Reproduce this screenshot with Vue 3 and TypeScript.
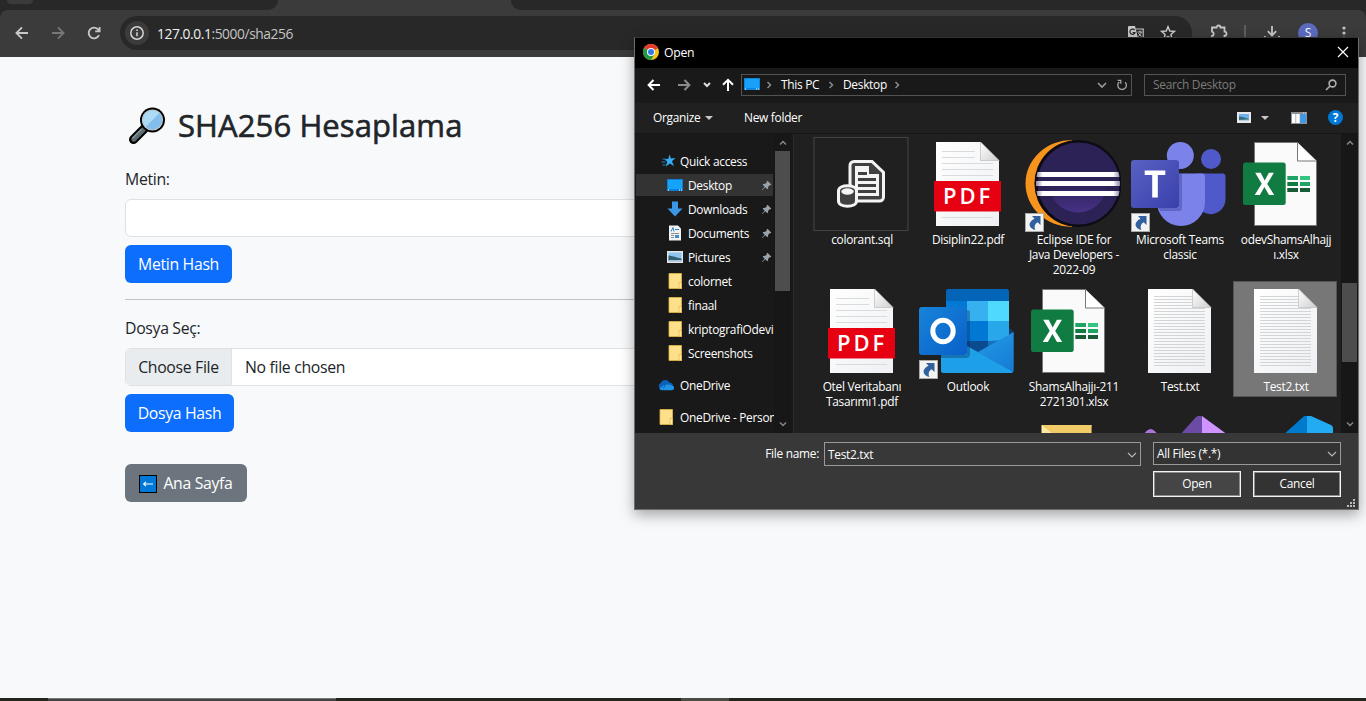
<script setup lang="ts">
interface SideItem {
  label: string
  icon: string
  sub?: boolean
  pinned?: boolean
  active?: boolean
  gap?: boolean
}
interface FileItem {
  kind: string
  lines: string[]
  link?: boolean
  selected?: boolean
}

const places: SideItem[] = [
  { label: 'Quick access', icon: 'star' },
  { label: 'Desktop', icon: 'desktop', sub: true, pinned: true, active: true },
  { label: 'Downloads', icon: 'down', sub: true, pinned: true },
  { label: 'Documents', icon: 'doc', sub: true, pinned: true },
  { label: 'Pictures', icon: 'pic', sub: true, pinned: true },
  { label: 'colornet', icon: 'folder', sub: true },
  { label: 'finaal', icon: 'folder', sub: true },
  { label: 'kriptografiOdevi', icon: 'folder', sub: true },
  { label: 'Screenshots', icon: 'folder', sub: true },
  { label: 'OneDrive', icon: 'cloud', gap: true },
  { label: 'OneDrive - Person', icon: 'folder', gap: true },
]

const files: FileItem[] = [
  { kind: 'sql', lines: ['colorant.sql'] },
  { kind: 'pdf', lines: ['Disiplin22.pdf'] },
  { kind: 'eclipse', lines: ['Eclipse IDE for', 'Java Developers -', '2022-09'], link: true },
  { kind: 'teams', lines: ['Microsoft Teams', 'classic'], link: true },
  { kind: 'xlsx', lines: ['odevShamsAlhajj', 'ı.xlsx'] },
  { kind: 'pdf', lines: ['Otel Veritabanı', 'Tasarımı1.pdf'] },
  { kind: 'outlook', lines: ['Outlook'], link: true },
  { kind: 'xlsx', lines: ['ShamsAlhajjı-211', '2721301.xlsx'] },
  { kind: 'txt', lines: ['Test.txt'] },
  { kind: 'txt', lines: ['Test2.txt'], selected: true },
  { kind: 'none', lines: [] },
  { kind: 'none', lines: [] },
  { kind: 'bigfolder', lines: [] },
  { kind: 'vs', lines: [] },
  { kind: 'vscode', lines: [] },
]

const textRules = Array.from({ length: 24 }, (_, i) => 12.5 + i * 3)
</script>

<template>
  <div class="screen">
    <div class="tabstrip">
      <div class="tabs-left"><i class="tab-btn"></i></div>
      <div></div>
      <div class="tabs-right"></div>
    </div>
    <header class="toolbar-wrap">
      <div class="toolbar">
        <svg class="nav" viewBox="0 0 16 16"><path d="M14 8H2.6M8 2.4 2.4 8 8 13.6" /></svg>
        <svg class="nav dim" viewBox="0 0 16 16"><path d="M2 8h11.4M8 2.4 13.6 8 8 13.6" /></svg>
        <svg class="nav" viewBox="0 0 16 16"><path d="M13 10.2A5.4 5.4 0 1 1 12.3 4.6L13.5 6M13.6 2v4.4H9.2" /></svg>
        <div class="omnibox">
          <span class="info"><svg viewBox="0 0 16 16"><circle cx="8" cy="8" r="6.2" /><path d="M8 7.2v4M8 4.6v1.4" /></svg></span>
          <span class="url"><b>127.0.0.1</b>:5000/sha256</span>
          <svg class="translate" viewBox="0 0 18 16">
            <path d="M2 1h6l3 12H2a1 1 0 0 1-1-1V2a1 1 0 0 1 1-1z" fill="#c7c7c7" />
            <path d="M8.8 4h7.4v10.5H11" fill="none" stroke="#c7c7c7" stroke-width="1.2" />
            <path d="M7.6 5.2A2.6 2.6 0 1 0 8 7.5H5.6" fill="none" stroke="#282828" stroke-width="1.2" />
            <path d="M10.5 7H15M13 5.6V7M14.3 7c-.4 2-1.6 3.5-3 4.5M11.5 8.2c.8 1.4 2 2.6 3.2 3.3" fill="none" stroke="#c7c7c7" />
          </svg>
          <svg class="fav" viewBox="0 0 16 16"><path d="M8 1.8 9.8 6l4.6.4-3.5 3 1.1 4.5L8 11.5l-4 2.4 1.1-4.5-3.5-3L6.2 6z" /></svg>
        </div>
        <svg class="ext" viewBox="0 0 18 18"><path d="M2 3.5h4.5a2 2 0 0 1 4 0h4v4.2a2 2 0 0 1 0 4V16H2v-4a2.2 2.2 0 0 0 0-4.3z" /></svg>
        <i class="sep"></i>
        <svg class="dl" viewBox="0 0 18 18"><path d="M9 2v9M4.8 7.2 9 11.4l4.2-4.2M1.8 12v3.500h14.400V12" /></svg>
        <span class="avatar">S</span>
        <svg class="more" viewBox="0 0 4 16"><circle cx="2" cy="3" r="1.6" /><circle cx="2" cy="8" r="1.6" /><circle cx="2" cy="13" r="1.6" /></svg>
      </div>
    </header>

    <main class="page">
      <h1>
        <svg class="lens" viewBox="0 0 38 38">
          <path d="M5.5 32.5 16.5 21.5" stroke="#000" stroke-width="9" stroke-linecap="round" />
          <path d="M5.8 32.2 15.5 22.5" stroke="#5c6b70" stroke-width="5" stroke-linecap="round" />
          <path d="M4.8 31 13 22.8" stroke="#8b989b" stroke-width="1.4" stroke-linecap="round" />
          <circle cx="24.5" cy="13" r="12.5" fill="#000" />
          <circle cx="24.5" cy="13" r="10.6" fill="#c4c9cc" />
          <circle cx="24.5" cy="13" r="9.6" fill="#83bdec" />
          <path d="M17.7 19.8A9.6 9.6 0 0 1 31.3 6.2z" fill="#addaf5" />
        </svg>
        <span>SHA256 Hesaplama</span>
      </h1>
      <label>Metin:</label>
      <div class="field"></div>
      <button class="btn b1">Metin Hash</button>
      <hr />
      <label class="l2">Dosya Seç:</label>
      <div class="field file"><span class="choose">Choose File</span><span class="nofile">No file chosen</span></div>
      <button class="btn b2">Dosya Hash</button>
      <button class="btn home">
        <svg viewBox="0 0 18 18"><rect x=".5" y=".5" width="17" height="17" fill="#0078d7" stroke="#000" /><path d="M14 9H4.5M7 6.8 4.6 9 7 11.2" fill="none" stroke="#fff" stroke-width="1.1" /></svg>
        <span>Ana Sayfa</span>
      </button>
    </main>
    <footer class="taskbar"><i></i><i class="task"></i><i></i><i class="task2"></i></footer>

    <section class="dialog">
      <div class="titlebar">
        <svg class="chrome" viewBox="0 0 16 16">
          <circle cx="8" cy="8" r="8" fill="#fbc116" />
          <path d="M8 8 1.07 4A8 8 0 0 1 14.93 4z" fill="#e33b2e" />
          <path d="M8 8 1.07 4A8 8 0 0 0 8 16l3.5-6z" fill="#229a48" />
          <path d="M8 4h6.93L8 8z" fill="#e33b2e" />
          <circle cx="8" cy="8" r="4" fill="#fff" /><circle cx="8" cy="8" r="3" fill="#3478e8" />
        </svg>
        <span>Open</span>
        <svg class="close" viewBox="0 0 12 12"><path d="m1 1 10 10M11 1 1 11" /></svg>
      </div>
      <div class="navrow">
        <svg class="arr" viewBox="0 0 14 14"><path d="M13 7H2M6.5 2 1.6 7l4.9 5" /></svg>
        <svg class="arr a2" viewBox="0 0 14 14"><path d="M1 7h11M7.5 2l4.900 5-4.900 5" /></svg>
        <svg class="chev a3" viewBox="0 0 8 6"><path d="m1 1 3 3 3-3" /></svg>
        <svg class="arr a4" viewBox="0 0 14 14"><path d="M7 13V2M2 6.8 7 1.8l5 5" /></svg>
        <div class="address">
          <svg class="desk" viewBox="0 0 16 12"><rect width="16" height="12" fill="#0d86dd" /><rect x="1" y="1" width="14" height="9" fill="#18a0fb" /><path d="M1 11h1M12 11h1M14 11h1" stroke="#fff" /></svg>
          <svg class="sepc" viewBox="0 0 6 8"><path d="m1.5 1 3 3-3 3" /></svg>
          <span class="c1">This PC</span>
          <svg class="sepc" viewBox="0 0 6 8"><path d="m1.5 1 3 3-3 3" /></svg>
          <span class="c2">Desktop</span>
          <svg class="sepc" viewBox="0 0 6 8"><path d="m1.5 1 3 3-3 3" /></svg>
          <svg class="drop" viewBox="0 0 10 8"><path d="m1 2 4 4 4-4" /></svg>
          <svg class="reload" viewBox="0 0 12 12"><path d="M9.2 3.2A4.3 4.3 0 1 1 3.2 3M1.6 1.4h3.2v3.4" /></svg>
        </div>
        <div class="search"><span>Search Desktop</span><svg viewBox="0 0 12 12"><circle cx="7.5" cy="4.5" r="3.4" /><path d="M5 7 1 11" /></svg></div>
      </div>
      <div class="cmdrow">
        <span class="org">Organize</span><i class="tri"></i><span class="newf">New folder</span>
        <svg class="view" viewBox="0 0 14 11"><rect width="14" height="11" fill="#e8e8e8" /><rect x="2" y="2" width="10" height="7" fill="#6fb0ee" /><path d="M2 4.5 6 5l6 2v2H2z" fill="#33707d" /><path d="M2 8 12 7.500V9H2z" fill="#b7cfe4" /></svg>
        <i class="tri t2"></i>
        <svg class="pane" viewBox="0 0 16 12"><rect width="16" height="12" fill="#8b9299" /><path d="M1 2h3.5v9H1zM5.2 2h3.5v9H5.2z" fill="#fff" /><path d="M9.4 2H15v9H9.4z" fill="#3c9be8" /><path d="M12 1h1M14 1h1" stroke="#ddd" /></svg>
        <span class="help">?</span>
      </div>
      <div class="body">
        <nav class="side">
          <div v-for="p in places" :key="p.label" class="place" :class="{ sub: p.sub, active: p.active, gap: p.gap }">
            <svg class="pi" viewBox="0 0 16 16">
              <g v-if="p.icon === 'star'"><path d="m8.5 1.500 1.400 4 4.600-.5-3.500 3.200 2 5-4-2.700-4.300 3 1.600-4.700-2.800-2.600 3.900-.4z" fill="#35aef5" /><path d="M1.500 6h3M.5 9h4M1.500 12h3" stroke="#2183c4" /></g>
              <g v-else-if="p.icon === 'desktop'"><rect y="2" width="16" height="12" fill="#0b7fd6" /><rect x="1" y="3" width="14" height="9" fill="#18a3fb" /><path d="M1 13h1M12 13h1M14 13h1" stroke="#fff" /></g>
              <path v-else-if="p.icon === 'down'" d="M5 .5h6v7h4.5L8 15.5.5 7.5H5z" fill="#3b97e6" />
              <g v-else-if="p.icon === 'doc'"><path d="M2 .5h9l3 3v12H2z" fill="#f2f2f2" /><path d="M4 6.500 6 2.500l1 4M8 4.500h4" stroke="#2d82c8" /><path d="M4 8.500h8M4 10.500h3M4 12.500h3" stroke="#8a8f94" /><path d="M8 10h4v3H8z" fill="#3b8fd0" /></g>
              <g v-else-if="p.icon === 'pic'"><rect y="2" width="16" height="12" fill="#e6e6e6" /><rect x="1.5" y="3.5" width="13" height="9" fill="#8cc4f2" /><path d="M1.5 6.500c4 0 8 2.500 13 3v2h-13z" fill="#2f5f70" /><path d="M1.500 11h13v1.500h-13z" fill="#a9c3d8" /></g>
              <g v-else-if="p.icon === 'folder'"><path d="M2 .5h12.500v15H2z" fill="#ffe08a" stroke="#e2b84a" stroke-width=".8" /><path d="M12 9.500h2.500v6H12z" fill="#ffe9a8" stroke="#e2b84a" stroke-width=".8" /></g>
              <g v-else><path d="M3.500 12.500A3.500 3.500 0 0 1 2.600 6 5 5 0 0 1 11.500 5.500 4 4 0 0 1 15 9l-3 3z" fill="#0a63b8" /><path d="m5 12.800 3-5.300 4 .2 2.500 1a2.300 2.300 0 0 1-.8 4.500H4.500a4 4 0 0 1-3.200-1.500l5-4z" fill="#1f93e4" /></g>
            </svg>
            <span>{{ p.label }}</span>
            <svg v-if="p.pinned" class="pin" viewBox="0 0 12 12"><path d="m7 .8 4.2 4.2-.9.8-.8-.2L7.800 7.300l-.1 2.100-.9.800L4.600 8 1.200 11.300.8 10.900 4 7.400 1.800 5.200l.8-.9 2.200-.1 1.600-1.700-.2-.9z" /></svg>
          </div>
        </nav>
        <div class="sbar sbar-l"><svg viewBox="0 0 8 6"><path d="m1 4.500 3-3 3 3" /></svg><i></i><svg viewBox="0 0 8 6"><path d="m1 1.500 3 3 3-3" /></svg></div>
        <div class="split"></div>
        <div class="grid">
          <div v-for="(f, n) in files" :key="n" class="cell" :class="{ sel: f.selected }">
            <svg class="fi" viewBox="0 0 96 96">
              <defs>
                <linearGradient id="paper" x2="1" y2="1"><stop stop-color="#fff" /><stop offset="1" stop-color="#eef0f3" /></linearGradient>
                <linearGradient id="fold" x2="1" y2="1"><stop stop-color="#fff" /><stop offset="1" stop-color="#cfcfcf" /></linearGradient>
                <linearGradient id="tile" x2="1" y2="1"><stop stop-color="#5961c3" /><stop offset="1" stop-color="#3940ab" /></linearGradient>
                <linearGradient id="otile" x2="1" y2="1"><stop stop-color="#1784d9" /><stop offset="1" stop-color="#0a5fc9" /></linearGradient>
                <linearGradient id="env" x2="1" y2="1"><stop stop-color="#28a8ea" /><stop offset="1" stop-color="#1578d4" /></linearGradient>
                <linearGradient id="ecl" y2="1" x2="0"><stop offset=".5" stop-color="#2c2255" /><stop offset="1" stop-color="#483187" /></linearGradient>
                <linearGradient id="stripe"><stop stop-color="#8d88a5" /><stop offset=".08" stop-color="#fff" /><stop offset=".92" stop-color="#fff" /><stop offset="1" stop-color="#8d88a5" /></linearGradient>
              </defs>
              <g v-if="f.kind === 'sql'">
                <rect x="1" y=".5" width="94" height="93" fill="none" stroke="#444" />
                <path d="M41 24.500h18l11.500 11V60a4 4 0 0 1-4 4H41a4 4 0 0 1-4-4V28.500a4 4 0 0 1 4-4z" fill="#404040" stroke="#f4f4f4" stroke-width="3" />
                <path d="M42 29h14v8h10v22H42z" fill="#f4f4f4" />
                <path d="M45 36.500h9M45 42.500h18M45 48.500h18M45 54.500h18" stroke="#404040" stroke-width="3" />
                <path d="M25.500 54c0-7 18-7 18 0v10c0 7-18 7-18 0z" fill="#404040" stroke="#f4f4f4" stroke-width="3" />
                <ellipse cx="34.500" cy="54.500" rx="6.200" ry="3.200" fill="#f4f4f4" />
              </g>
              <g v-else-if="f.kind === 'pdf' || f.kind === 'txt'">
                <path d="M17 5h44.500L80 23.500V89H17z" fill="url(#paper)" />
                <g v-if="f.kind === 'pdf'">
                  <path d="M23 14.500h33M23 20.500h33M23 26.500h51M23 32.500h51M23 38.500h51M23 80.500h51" stroke="#dadbdd" />
                  <path d="M15 44h67v30.500H15z" fill="#e60012" />
                  <text x="24" y="66.500" class="pdft" textLength="47">PDF</text>
                </g>
                <path v-for="y in f.kind === 'txt' ? textRules : []" :key="y" :d="`M23 ${y}h${y < 24 ? 38 : 51}`" stroke="#d3d4d6" />
                <path d="M61.500 5v18.500H80z" fill="url(#fold)" stroke="#bdbdbd" stroke-width=".7" />
              </g>
              <g v-else-if="f.kind === 'eclipse'">
                <path d="M47 3A46.500 43.500 0 0 0 47 90z" fill="#f7941e" />
                <circle cx="53" cy="46.500" r="43.600" fill="#0d0b16" /><circle cx="53.500" cy="46.500" r="41" fill="#2c2255" />
                <circle cx="53" cy="46.500" r="29" fill="url(#ecl)" />
                <path d="M12.500 35h81l1 5h-83zM11 44h84v5H11zM11.500 54h83l-1 5h-81z" fill="url(#stripe)" />
              </g>
              <g v-else-if="f.kind === 'teams'">
                <circle cx="80" cy="22" r="10" fill="#5059c9" /><circle cx="49.300" cy="18.500" r="13.500" fill="#7b83eb" />
                <path d="M65 36.500h26.500a3 3 0 0 1 3 3V61a15 15 0 0 1-24 13z" fill="#5059c9" />
                <path d="M30 36.500h41a3 3 0 0 1 3 3V65a24 24 0 0 1-48 0V40z" fill="#7b83eb" />
                <path d="M48 36.500h3V71a3 3 0 0 1-3 3H29.500l-2-3H48z" fill="#3d4397" opacity=".45" />
                <rect y="23" width="48" height="48" rx="3" fill="url(#tile)" />
                <path d="M13.700 33.500h20.600v4.600h-7.500V60.500h-5.600V38.100h-7.500z" fill="#fff" />
              </g>
              <g v-else-if="f.kind === 'xlsx'">
                <path d="M17.500 5.500h43l19 18.500v64.500h-62z" fill="#fafafa" stroke="#777" /><path d="M60.500 5.500V24h19" fill="#fff" stroke="#777" />
                <rect x="6" y="25.500" width="42.700" height="42.500" rx="2.500" fill="#107c41" />
                <path d="m17.700 58 7-11.300-6.500-11h5.500l4 7.700 4.200-7.700h5l-6.700 11.200 7 11.100H32l-4.600-8-4.500 8z" fill="#fff" />
                <path d="M50.300 39H61v4H50.300z" fill="#21a366" /><path d="M63 39h10v4H63z" fill="#33c481" />
                <path d="M50.300 45H61v4H50.300z" fill="#107c41" /><path d="M63 45h10v4H63z" fill="#21a366" />
                <path d="M50.300 51H61v4H50.300zM63 51h10v4H63z" fill="#185c37" />
              </g>
              <g v-else-if="f.kind === 'outlook'">
                <rect x="27" y="5" width="63" height="60" rx="2.500" fill="#0364b8" />
                <path d="M27 17h21v20H27z" fill="#0078d4" /><path d="M48 17h21v20H48z" fill="#36b0ef" /><path d="M69 17h21v20H69z" fill="#50d9ff" />
                <path d="M27 37h21v20H27z" fill="#0364b8" /><path d="M48 37h21v20H48z" fill="#0078d4" /><path d="M69 37h21v20H69z" fill="#28a8ea" />
                <path d="M27 57h63v15H27z" fill="#0a4a8e" /><path d="m69 57 21-1v5L69 68z" fill="#1272be" />
                <path d="M90 44.500q5 1 4.500 5L90 53z" fill="#123b6d" />
                <path d="M94.700 48v38a3 3 0 0 1-3 3H25a3 3 0 0 1-3-3V48l37 20z" fill="url(#env)" />
                <path d="M22 48v38q0 3 3 3h66.500l2.500-1z" fill="#1ea0e8" />
                <path d="M48 26a3 3 0 0 1 3 3v41a4 4 0 0 1-4 4H22v-3h26z" fill="#053764" opacity=".4" />
                <rect y="23" width="48" height="48" rx="3" fill="url(#otile)" />
                <ellipse cx="24" cy="47" rx="10.200" ry="10.800" fill="none" stroke="#fff" stroke-width="5" />
              </g>
              <g v-else-if="f.kind === 'bigfolder'"><path d="M16.700 9h49.800v30H16.700z" fill="#ffe08c" /><path d="M16.700 9h49.800l-4 30-38-22z" fill="#f0cb66" /><path d="m16.700 9 10 8v20h-10z" fill="#ffe9a3" /></g>
              <g v-else-if="f.kind === 'vs'"><path d="m11 20 5-5.500q4-3 7 0l6 5.500z" fill="#a876d8" /><path d="M48 20 65 1q3-2.500 7 0v19z" fill="#6b4ba3" /><path d="m71 0 26 19v1H71z" fill="#cf94ff" /></g>
              <g v-else-if="f.kind === 'vscode'"><path d="M45 20 66 1q3-2.500 5-1v20z" fill="#007acc" /><path d="M70 0q2-1 4 0l20 9q2 1 2 3v8H70z" fill="#22aaf2" /></g>
              <g v-if="f.link"><rect x=".5" y="76.500" width="18" height="18" fill="#f3f3f3" stroke="#aaa" /><path d="M7 79h8.500v9l-2.800-2.800C9.500 87 9 90 10.500 93 3 91 2.500 85 9.500 81.700z" fill="#31609f" /></g>
            </svg>
            <div class="name"><div v-for="l in f.lines" :key="l">{{ l }}</div></div>
          </div>
        </div>
        <div class="sbar sbar-r"><svg viewBox="0 0 8 6"><path d="m1 4.500 3-3 3 3" /></svg><i></i><svg viewBox="0 0 8 6"><path d="m1 1.500 3 3 3-3" /></svg></div>
      </div>
      <div class="bottom">
        <span class="fl">File name:</span>
        <div class="combo name-box"><span>Test2.txt</span><svg viewBox="0 0 10 8"><path d="m1 2 4 4 4-4" /></svg></div>
        <div class="right">
          <div class="combo types"><span>All Files (*.*)</span><svg viewBox="0 0 10 8"><path d="m1 2 4 4 4-4" /></svg></div>
          <div class="acts"><button class="open">Open</button><button>Cancel</button></div>
        </div>
        <svg class="grip" viewBox="0 0 9 9"><path d="M6 0h2v2H6zM6 3h2v2H6zM6 6h2v2H6zM3 3h2v2H3zM3 6h2v2H3zM0 6h2v2H0z" fill="#bbb" /></svg>
      </div>
    </section>
  </div>
</template>

<style>
html, body { margin: 0; overflow: hidden; background: #f8f9fd; }
</style>
<style scoped>
* { box-sizing: border-box; }
svg { display: block; flex: none; fill: none; }
button { font: inherit; letter-spacing: inherit; margin: 0; padding: 0; }
.screen { width: 1366px; height: 701px; position: relative; overflow: hidden; display: flex; flex-direction: column; font-family: "Open Sans", "Noto Sans", sans-serif; background: #f8f9fb; }
.tabstrip { height: 10px; flex: none; background: #3b3b3b; display: grid; grid-template-columns: 278px 233px 1fr; }
.tabs-left { background: #282828; border-bottom-right-radius: 10px; }
.tabs-right { background: #282828; border-bottom-left-radius: 10px; }
.tab-btn { display: block; width: 26px; height: 4px; margin-left: 7px; background: #3b3b3b; border-radius: 0 0 10px 10px; }
.toolbar-wrap { background: #282828; flex: none; }
.toolbar { height: 47px; background: #3b3b3b; border-radius: 8px 8px 0 0; display: flex; align-items: center; padding: 0 0 1px 14px; }
.nav { width: 16px; height: 16px; margin-right: 20px; stroke: #c9c9c9; stroke-width: 1.8; }
.dim { stroke: #777; }
.omnibox { width: 1072px; height: 34px; border-radius: 17px; background: #282828; margin-left: -2px; display: flex; align-items: center; padding-left: 5px; }
.info { width: 24px; height: 24px; border-radius: 50%; background: #3b3b3b; display: grid; place-items: center; }
.info svg { width: 16px; height: 16px; stroke: #d5d5d5; stroke-width: 1.5; }
.url { margin-left: 8px; font-size: 13.8px; letter-spacing: -.42px; color: #c4c4c4; }
.url b { font-weight: 400; color: #f1f1f1; }
.translate { width: 18px; height: 16px; margin-left: auto; }
.fav { width: 16px; height: 16px; margin: 0 16px 0 15px; stroke: #c7c7c7; stroke-width: 1.5; }
.ext { width: 18px; height: 18px; margin-left: 18px; stroke: #c7c7c7; stroke-width: 1.8; }
.sep { width: 2px; height: 16px; background: #5e5e5e; margin-left: 16px; }
.dl { width: 18px; height: 18px; margin-left: 17px; stroke: #c7c7c7; stroke-width: 1.8; }
.avatar { width: 20px; height: 20px; border-radius: 50%; background: #5c6bc0; color: #fff; font-size: 12px; line-height: 20px; text-align: center; margin-left: 17px; }
.more { width: 4px; height: 16px; margin-left: 24px; fill: #c7c7c7; }

.page { flex: 1; padding: 48px 0 0 125px; color: #212529; font-size: 15.8px; letter-spacing: -.32px; line-height: 24px; display: flex; flex-direction: column; align-items: flex-start; }
h1 { margin: 0; height: 38px; display: flex; align-items: center; font-size: 31px; font-weight: 500; line-height: 38px; letter-spacing: .1px; -webkit-text-stroke: .6px #212529; }
.lens { width: 38px; height: 38px; margin: 4px 12px 0 3px; }
h1 span { margin-top: 1px; }
label { margin-top: 24px; line-height: 24px; }
.field { width: 1116px; height: 38px; margin-top: 8px; flex: none; background: #fff; border: 1px solid #dee2e6; border-radius: 6px; }
.btn { height: 38px; flex: none; border: 0; border-radius: 6px; background: #0d6efd; color: #fff; margin-top: 8px; }
.b1 { width: 107px; }
.b2 { width: 109px; }
hr { width: 1116px; height: 1px; border: 0; background: #c0c2c6; margin: 16px 0 0; flex: none; }
.l2 { margin-top: 16px; }
.file { display: flex; overflow: hidden; line-height: 36px; }
.choose { width: 106px; flex: none; background: #e9ecef; border-right: 1px solid #dee2e6; text-align: center; }
.nofile { margin-left: 13px; }
.home { width: 122px; margin-top: 32px; background: #6c757d; display: flex; align-items: center; justify-content: center; gap: 6px; }
.home svg { width: 18px; height: 18px; margin-top: 1px; }
.taskbar { height: 3px; flex: none; background: #25241f; display: grid; grid-template-columns: 48px 288px 345px 48px 1fr; }
.task { background: #454244; border-top: 1px solid #777; }
.task2 { background: #4c4b46; }

.dialog { position: absolute; left: 634px; top: 37px; width: 725px; height: 473px; border: 1px solid #6d6d6d; border-top-color: #333; background: #191919; color: #fff; font-size: 11.9px; letter-spacing: -.28px; line-height: 15px; display: flex; flex-direction: column; box-shadow: 0 5px 13px rgba(0, 0, 0, .34); }
.titlebar { height: 30px; flex: none; background: #000; display: flex; align-items: center; padding: 0 9px 2px 8px; }
.chrome { width: 16px; height: 16px; margin-right: 5px; }
.titlebar span { font-size: 12.200px; }
.close { width: 12px; height: 12px; margin-left: auto; stroke: #fff; stroke-width: 1.2; }
.navrow { height: 35px; flex: none; display: flex; align-items: center; padding: 0 0 1px 12px; }
.arr { width: 14px; height: 14px; stroke: #fff; stroke-width: 2; }
.a2 { margin-left: 16px; stroke: #8b8b8b; }
.a3 { width: 8px; height: 6px; margin-left: 12px; stroke: #ddd; stroke-width: 2; }
.a4 { margin-left: 10px; }
.address { width: 391px; height: 22px; margin-left: 6px; border: 1px solid #535353; display: flex; align-items: center; }
.desk { width: 16px; height: 12px; margin-left: 2px; margin-top: -2px; }
.sepc { width: 6px; height: 8px; margin-left: 6px; stroke: #8b8b8b; stroke-width: 1.5; }
.c1 { margin-left: 9px; width: 41px; }
.c2 { margin-left: 9px; width: 45px; }
.c1, .c2 { white-space: nowrap; margin-top: -1px; }
.drop { width: 10px; height: 8px; margin-left: auto; stroke: #9a9a9a; stroke-width: 1.6; }
.reload { width: 12px; height: 12px; margin: 0 3px 0 9px; stroke: #a5a5a5; stroke-width: 1.3; }
.search { width: 202px; height: 22px; margin-left: 12px; border: 1px solid #535353; display: flex; align-items: center; justify-content: space-between; padding: 0 8px; color: #7b7b7b; }
.search span { margin-top: -1px; }
.search svg { width: 12px; height: 12px; stroke: #b0b0b0; stroke-width: 1.6; }
.cmdrow { height: 31px; flex: none; background: #202020; border-bottom: 1px solid #151515; display: flex; align-items: center; padding: 0 0 1px 18px; }
.org { width: 48px; }
.tri { border: 4.500px solid transparent; border-top-color: #c8c8c8; border-bottom: 0; margin-left: 4px; }
.newf { margin-left: 31px; }
.view { width: 14px; height: 11px; margin-left: auto; }
.t2 { margin-left: 10px; }
.pane { width: 16px; height: 12px; margin-left: 22px; }
.help { width: 15px; height: 15px; border-radius: 50%; background: #0078d7; font-weight: 700; text-align: center; margin: 0 15px 0 21px; }
.body { height: 299px; flex: none; display: flex; overflow: hidden; }
.side { width: 139px; padding-top: 16px; overflow: hidden; flex: none; }
.place { height: 22px; margin: 0 0 2px 1px; padding-left: 25px; display: flex; align-items: center; white-space: nowrap; position: relative; }
.place.gap { padding-left: 22px; margin-top: 10px; }
.place.sub { padding-left: 31px; }
.place.active { background: #333; width: 137px; }
.pi { width: 16px; height: 16px; margin-right: 5px; }
.place:not(.sub) .pi { margin-right: 3px; }
.place.gap .pi { margin-right: 6px; }
.pin { width: 11px; height: 11px; position: absolute; left: 125px; top: 6px; fill: #9aa3ab; }
.sbar { display: flex; flex-direction: column; align-items: center; padding: 6px 0 6px; background: #171717; flex: none; }
.sbar svg { width: 8px; height: 6px; stroke: #868686; stroke-width: 1.5; }
.sbar i { width: 15px; background: #4d4d4d; }
.sbar-l { width: 17px; }
.sbar-l i { height: 140px; margin: 5px 0 auto; }
.sbar-r { width: 17px; }
.sbar-r i { height: 79px; margin: 137px 0 auto; }
.split { width: 3px; flex: none; background: #191919; border-right: 1px solid #2b2b2b; }
.grid { flex: 1; background: #202020; padding: 0 0 0 15px; display: grid; grid-template-columns: repeat(5, 104px); column-gap: 2px; grid-template-rows: 147px 132px 147px; overflow: hidden; }
.cell { height: 116px; padding: 3px 4px 0; border: 0; }
.cell.sel { background: #777; box-shadow: inset 0 0 0 1px #555; }
.fi { width: 96px; height: 96px; margin-left: -.5px; }
.name { text-align: center; white-space: nowrap; margin: -1px -6px 0; line-height: 15px; padding-left: 2px; }
.pdft { font: 600 22px "Open Sans", sans-serif; fill: #fff; }
.bottom { flex: 1; background: #383838; display: flex; align-items: flex-start; position: relative; }
.fl { width: 184px; text-align: right; margin-top: 13px; }
.combo { width: 317px; height: 23px; margin: 9px 0 0 5px; border: 1px solid #999; display: flex; align-items: center; justify-content: space-between; padding: 0 3px; background: #383838; }
.name-box { height: 24px; padding-top: 1px; }
.combo svg { width: 10px; height: 8px; stroke: #b5b5b5; stroke-width: 1.200; }
.right { margin-left: 12px; width: 188px; }
.combo.types { width: 188px; margin-left: 0; background: #333; }
.acts { display: flex; gap: 12px; margin-top: 6px; }
.acts button { width: 88px; height: 26px; padding-bottom: 2px; border: 1px solid #f4f4f4; box-shadow: inset 0 0 0 1px #8b8b8b; background: #333; color: #fff; }
.acts .open { background: #454545; }
.grip { width: 9px; height: 9px; position: absolute; right: 2px; bottom: 1px; }
</style>
